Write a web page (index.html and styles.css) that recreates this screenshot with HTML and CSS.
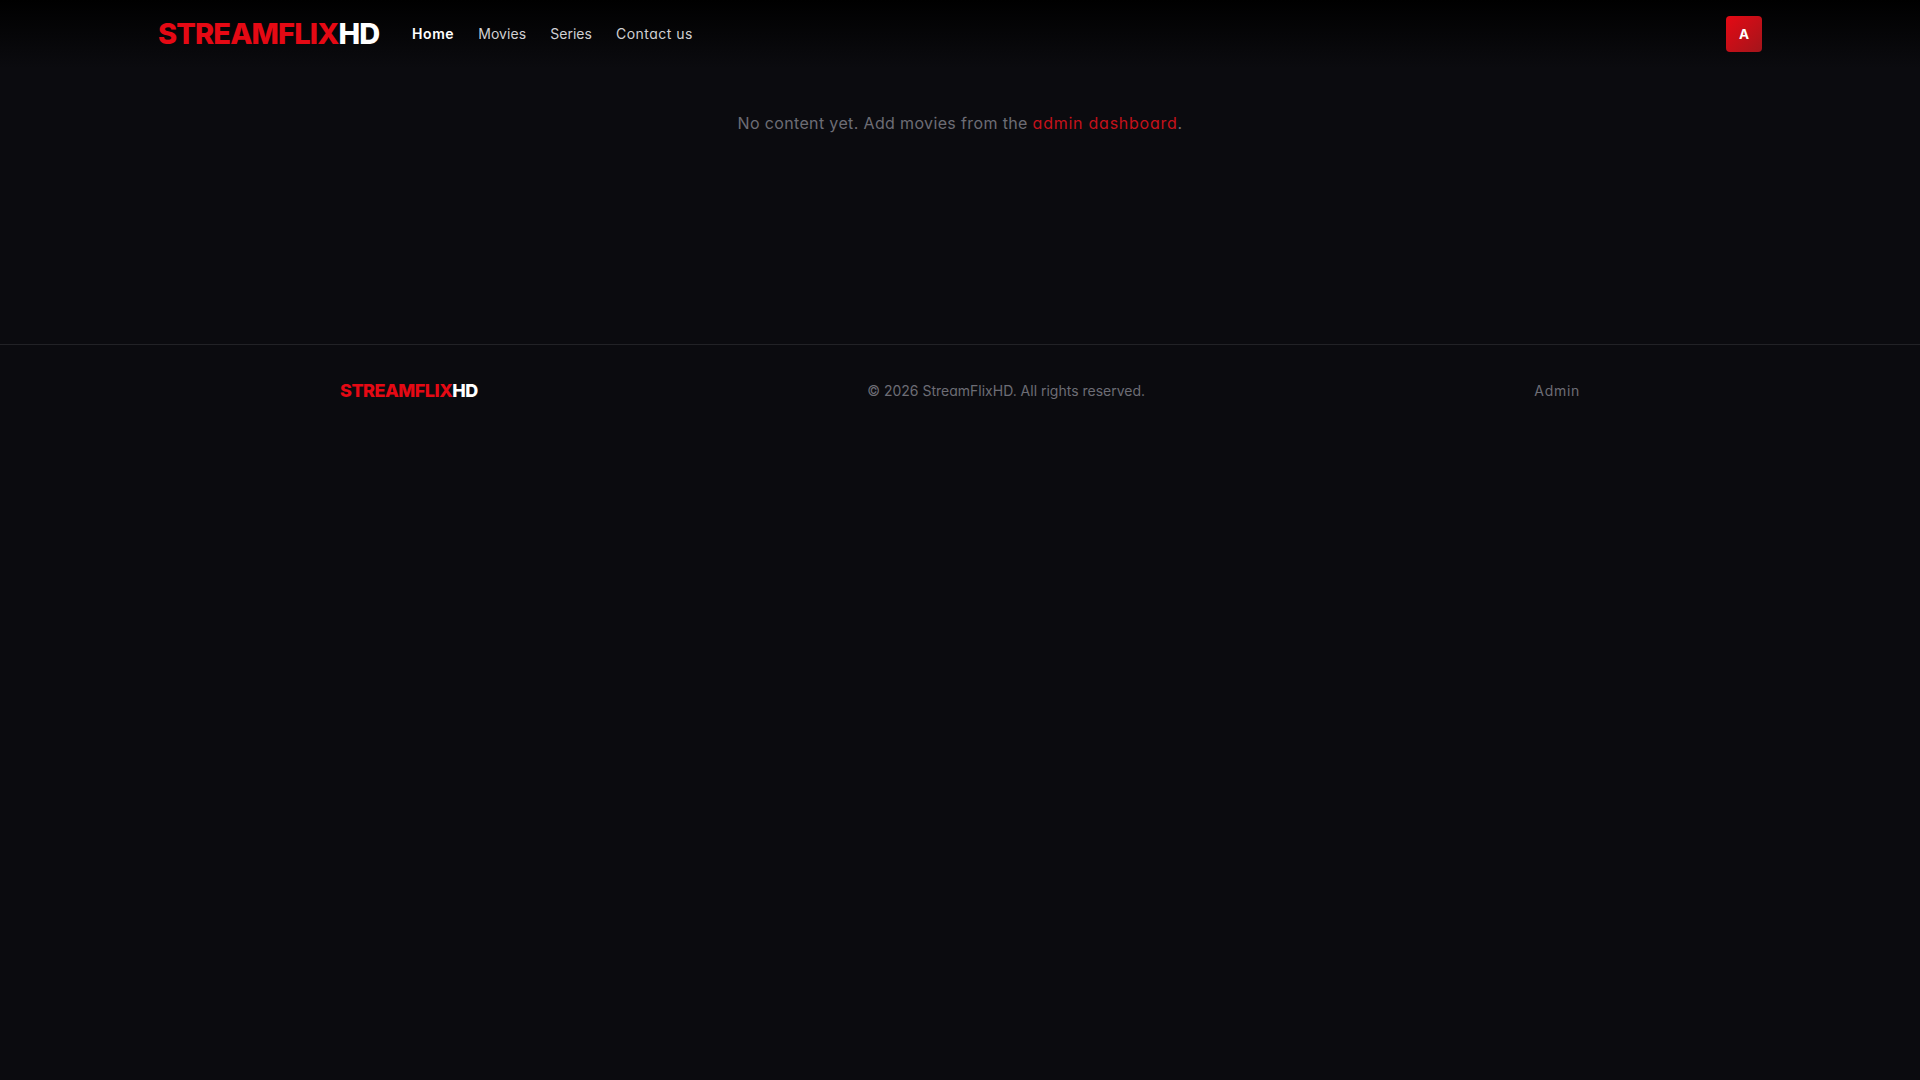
FILE: index.html
```html
<!DOCTYPE html>
<html lang="en">
<head>
<meta charset="UTF-8">
<meta name="viewport" content="width=device-width, initial-scale=1.0">
<title>StreamFlixHD</title>
<link rel="stylesheet" href="styles.css">
</head>
<body>
<header class="navbar">
<div class="navbar-inner">
<a href="#" class="logo">STREAMFLIX<span>HD</span></a>
<nav class="nav-links">
<a href="#" class="active">Home</a>
<a href="#">Movies</a>
<a href="#">Series</a>
<a href="#" class="contact">Contact us</a>
</nav>
<a href="#" class="avatar">A</a>
</div>
</header>

<main class="content">
<p class="empty">No content yet. Add movies from the <a href="#">admin dashboard</a>.</p>
</main>

<footer class="footer">
<div class="footer-inner">
<a href="#" class="footer-logo">STREAMFLIX<span>HD</span></a>
<p class="copyright">© 2026 StreamFlixHD. All rights reserved.</p>
<a href="#" class="footer-link">Admin</a>
</div>
</footer>
</body>
</html>
```
FILE: styles.css
```css
* {
margin: 0;
padding: 0;
box-sizing: border-box;
}

body {
font-family: Inter, sans-serif;
font-feature-settings: "cv11";
background: #0b0b0f;
color: #fff;
min-height: 100vh;
}

a {
color: inherit;
text-decoration: none;
}

.navbar {
height: 68px;
background: linear-gradient(to bottom, #000 0%, #0b0b0f 100%);
}

.navbar-inner {
max-width: 1700px;
height: 100%;
margin: 0 auto;
padding: 0 48px;
display: flex;
align-items: center;
}

.logo {
width: 222px;
padding-bottom: 1px;
font-size: 29px;
font-weight: 800;
letter-spacing: -0.87px;
color: #e50914;
white-space: nowrap;
}

.logo span, .footer-logo span {
color: #fff;
}

.nav-links {
display: flex;
gap: 24px;
margin-left: 32px;
padding-bottom: 1px;
font-size: 14px;
letter-spacing: 0.05px;
color: #d0d0d3;
white-space: nowrap;
}

.nav-links .active {
color: #fff;
font-weight: 600;
letter-spacing: 0.6px;
}

.nav-links .contact {
letter-spacing: 0.48px;
}

.avatar {
width: 36px;
height: 36px;
margin-left: auto;
padding-bottom: 1px;
display: flex;
align-items: center;
justify-content: center;
border-radius: 4px;
background: linear-gradient(135deg, #e50914, #a3151b);
font-size: 13.5px;
font-weight: 700;
}

.content {
height: 276px;
padding-top: 43px;
}

.empty {
text-align: center;
font-size: 16px;
line-height: 24px;
letter-spacing: 0.36px;
color: #6d6d75;
}

.empty a {
color: #c5121b;
letter-spacing: 0.75px;
}

.footer {
border-top: 1px solid #222226;
padding: 32px 0;
}

.footer-inner {
max-width: 1240px;
height: 26px;
margin: 0 auto;
display: flex;
align-items: center;
justify-content: space-between;
font-size: 14px;
color: #6d6d75;
}

.footer-logo {
width: 138px;
font-size: 18px;
font-weight: 800;
letter-spacing: -0.5px;
color: #e50914;
white-space: nowrap;
}

.footer-link {
letter-spacing: 0.7px;
}
```
